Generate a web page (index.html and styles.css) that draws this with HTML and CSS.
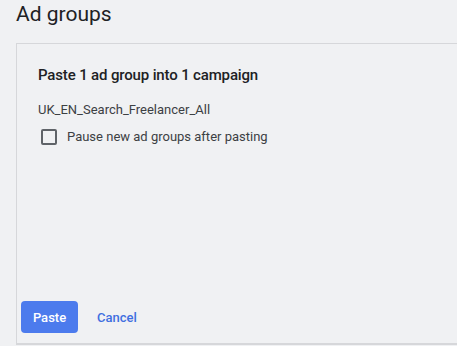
FILE: index.html
```html
<!DOCTYPE html>
<html>
<head>
<meta charset="utf-8">
<link rel="stylesheet" href="styles.css">
</head>
<body>
<div class="page">
  <h1 class="title">Ad groups</h1>
  <div class="panel">
    <div class="panel-body">
      <h2 class="heading">Paste 1 ad group into 1 campaign</h2>
      <div class="campaign">UK_EN_Search_Freelancer_All</div>
      <label class="check-row">
        <span class="checkbox"></span>
        <span class="check-label">Pause new ad groups after pasting</span>
      </label>
    </div>
    <div class="footer">
      <button class="btn-primary">Paste</button>
      <button class="btn-text">Cancel</button>
    </div>
  </div>
</div>
</body>
</html>
```
FILE: styles.css
```css
html, body {
  margin: 0;
  padding: 0;
  background: #f0f1f3;
  font-family: Roboto, "Liberation Sans", sans-serif;
  color: #202124;
}
.page {
  width: 457px;
  height: 346px;
  overflow: hidden;
  padding-left: 16px;
  box-sizing: border-box;
  display: flex;
  flex-direction: column;
}
.title {
  margin: 0;
  height: 43px;
  font-size: 21px;
  font-weight: 400;
  line-height: 28px;
  padding-top: 0;
  color: #202124;
}
.panel {
  border-left: 1px solid #d6d7da;
  border-top: 1px solid #d6d7da;
  border-bottom: 2px solid #d6d7da;
  height: 302px;
  box-sizing: border-box;
  display: flex;
  flex-direction: column;
  padding-left: 4px;
}
.panel-body {
  padding-left: 17px;
  padding-top: 21px;
}
.heading {
  margin: 0;
  font-size: 15px;
  font-weight: 500;
  line-height: 20px;
  letter-spacing: -0.15px;
  color: #202124;
}
.campaign {
  margin-top: 16px;
  font-size: 13px;
  line-height: 18px;
  color: #3c4043;
}
.check-row {
  display: flex;
  align-items: center;
  gap: 10px;
  margin-top: 9px;
  padding-left: 3px;
}
.checkbox {
  width: 16px;
  height: 16px;
  box-sizing: border-box;
  border: 2px solid #5f6368;
  border-radius: 2px;
}
.check-label {
  font-size: 13px;
  line-height: 18px;
  color: #3c4043;
}
.footer {
  margin-top: auto;
  margin-bottom: 10px;
  display: flex;
  align-items: center;
  gap: 6px;
}
.btn-primary {
  width: 57px;
  height: 32px;
  border: none;
  border-radius: 4px;
  background: #4c7bed;
  color: #fff;
  font-family: Roboto, "Liberation Sans", sans-serif;
  font-size: 13px;
  font-weight: 500;
  padding: 0;
}
.btn-text {
  height: 32px;
  border: none;
  background: none;
  color: #3f6fe0;
  font-family: Roboto, "Liberation Sans", sans-serif;
  font-size: 13px;
  font-weight: 500;
  padding: 0 13px;
}
```
